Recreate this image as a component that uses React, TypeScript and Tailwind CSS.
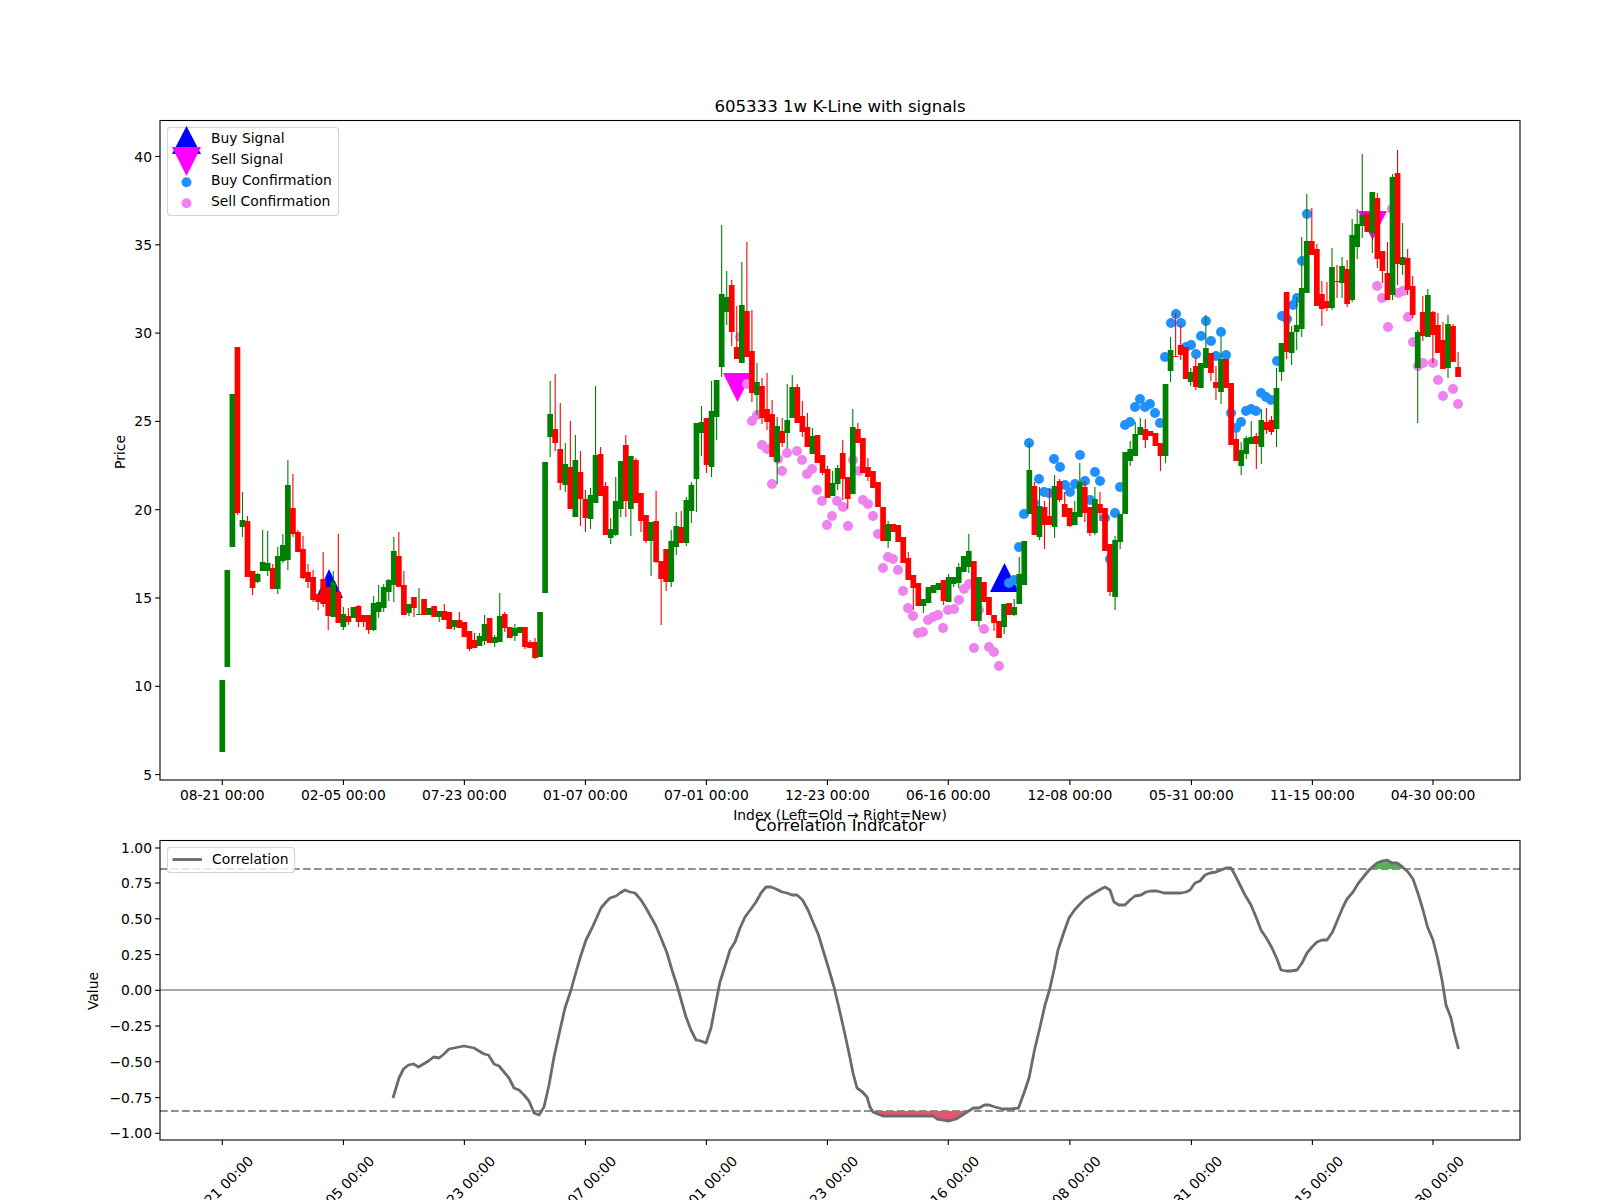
import React from "react";

type Candle = [string, number, number, number?, number?];

// color, body top, body bottom, wick top, wick bottom (pixels)
const candles: Candle[] = [
  ["g",680,752],["g",570,667],["g",394,547],["r",347,513,347,515],["g",520,527,492,537],
  ["r",521,577,516,577],["r",571,588,571,595],["g",574,582,573,583],["g",562,571,530,571],["g",563,571,531,576],
  ["r",568,589,564,589],["g",556,589,547,594],["g",545,561,534,563],["g",485,560,460,570],["r",508,534,474,537],
  ["r",532,552,530,552],["r",549,578,536,579],["r",572,582,564,588],["r",577,600,570,602],["r",594,602,594,610],
  ["r",579,604,552,607],["r",587,616,587,630],["g",582,617,571,617],["r",592,623,534,623],["g",614,627,607,630],
  ["r",616,622,608,625],["g",607,618],["r",606,622,605,627],["r",615,622,615,627],["r",615,630,615,634],
  ["g",603,630,596,631],["g",602,612,585,618],["g",587,608,584,612],["g",580,592,579,601],["g",551,585,537,602],
  ["r",556,587,532,587],["r",585,615,571,615],["g",604,613,604,616],["r",597,608,597,617],["g",614,615,588,615],
  ["r",599,615],["g",608,615],["r",606,617],["g",611,617,611,622],["r",611,620,604,620],
  ["r",612,629],["g",620,627,620,630],["r",620,628,612,628],["r",622,637],["r",631,649,631,651],
  ["r",640,648,633,648],["g",636,646,633,646],["g",624,641,615,645],["r",618,643],["g",637,643,635,647],
  ["g",616,642,593,642],["r",614,628,612,632],["r",627,638],["g",628,636,624,641],["g",627,633],
  ["r",627,647,627,649],["r",642,648,640,648],["r",642,658,638,659],["g",612,657],["g",462,593],
  ["g",414,437,381,457],["r",429,443,374,451],["r",449,483,403,490],["g",464,485,443,492],["r",467,509,421,509],
  ["g",460,517,435,517],["r",472,499,451,526],["r",499,518,490,532],["g",495,519,488,529],["g",455,503,386,503],
  ["r",454,496,447,496],["r",486,535,482,535],["g",529,538,518,544],["g",501,535,477,536],["g",461,509,461,517],
  ["r",445,501,435,517],["g",456,509,456,536],["r",460,503,458,503],["r",493,521,493,532],["r",515,541,515,543],
  ["g",522,541,522,576],["r",521,562,491,563],["r",561,579,561,625],["r",549,582,549,591],["g",541,582,530,587],
  ["g",526,547,512,555],["r",527,543,511,543],["g",500,543,497,546],["g",485,511,482,523],["g",423,479,423,512],
  ["g",422,433,406,456],["r",418,465,418,473],["g",411,467,381,477],["g",380,417,380,440],["g",294,367,225,377],
  ["g",297,312,271,325],["r",285,332,280,346],["r",347,359,306,359],["g",305,363,262,363],["r",311,357,242,357],
  ["r",351,393,310,402],["g",382,395,363,415],["r",386,418,378,424],["r",409,422,373,430],["r",414,457,400,457],
  ["g",426,462,417,484],["r",431,443,418,447],["g",420,433,384,448],["g",387,418,375,418],["r",387,423,384,423],
  ["r",416,432,401,437],["r",427,447,413,447],["g",436,454,428,454],["r",435,463],["r",455,473,455,475],
  ["r",469,498,466,498],["g",483,496,471,496],["g",468,484,465,490],["r",453,479,440,500],["r",477,499,477,509],
  ["g",427,494,409,494],["r",429,443,423,443],["r",438,473],["r",467,477,458,481],["r",471,488],
  ["r",482,507],["r",507,541],["g",524,541,521,548],["r",524,532],["r",525,542],
  ["r",537,563],["r",558,580,552,580],["r",575,588,575,610],["r",583,606],["g",599,606,599,613],
  ["g",587,603],["g",585,593],["g",583,590],["r",580,601,580,605],["g",577,602,574,602],
  ["g",577,584,577,587],["g",567,583,563,588],["g",556,572],["g",551,567,534,573],["r",561,621],
  ["g",577,621,577,627],["r",582,602],["r",597,615],["r",615,623,615,631],["r",621,638],
  ["g",604,627,604,634],["r",603,615],["g",607,615,599,616],["g",574,604,557,604],["g",541,585],
  ["g",470,514,443,514],["r",486,535,482,535],["g",506,537,487,540],["r",507,525,501,549],["r",516,525,489,525],
  ["g",486,527,475,538],["r",481,500,479,502],["r",504,517,492,517],["r",508,526,508,527],["g",512,525,501,525],
  ["g",482,517,463,517],["r",487,513,481,522],["r",507,533,507,536],["g",499,533,487,535],["r",504,513,492,521],
  ["r",508,551],["r",544,592,544,596],["g",540,597,536,610],["g",514,542,514,549],["g",452,514],
  ["g",449,461,441,466],["g",434,456,422,456],["g",427,435,418,435],["r",429,440,419,448],["r",431,436],
  ["r",433,446],["r",443,456,443,471],["g",384,456,384,463],["g",350,371,337,382],["r",356,357,313,357],
  ["r",345,355,325,360],["r",347,379],["g",372,382,368,386],["r",366,387,357,390],["g",363,388],
  ["g",348,368,315,368],["r",353,373,353,381],["r",382,388,366,400],["g",359,392,337,404],["r",359,388],
  ["r",383,445],["r",439,461,433,461],["g",450,466,442,475],["g",438,454,436,459],["g",437,444,421,444],
  ["r",436,444,433,469],["g",420,447,409,464],["r",422,430,408,434],["r",420,432,416,435],["g",388,429,368,447],
  ["g",343,372,343,381],["r",292,352,292,359],["g",332,353,326,365],["g",325,332,297,350],["g",288,329,237,337],
  ["g",241,293,194,293],["r",241,255,208,255],["r",249,306,244,306],["r",294,309,281,326],["r",301,308,282,311],
  ["g",267,308,248,310],["r",281,282,265,298],["g",266,283,257,298],["r",269,304,260,307],["g",235,300,219,302],
  ["g",224,247,209,259],["g",215,226,154,238],["r",213,232],["g",192,233,192,253],["r",198,259,193,268],
  ["r",251,271,251,283],["r",273,300,242,300],["g",177,295,174,300],["r",173,264,150,285],["g",257,265,223,275],
  ["r",258,290,249,295],["r",286,315,276,318],["g",332,368,330,423],["r",312,336,296,341],["g",295,337,289,337],
  ["r",312,335,311,363],["r",325,353,313,353],["r",340,369,322,369],["g",324,368,315,378],["r",326,362,324,362],
  ["r",367,377,352,377],
];

const blueDots = [
  [1009,583],[1014,580],[1019,547],[1024,514],[1029,443],[1034,503],[1039,479],[1044,492],[1049,493],[1054,459],
  [1060,467],[1065,485],[1070,492],[1075,484],[1080,455],[1085,481],[1090,500],[1095,472],[1100,481],[1105,518],
  [1110,559],[1115,513],[1120,487],[1125,425],[1130,422],[1135,407],[1140,399],[1145,407],[1150,404],[1155,413],
  [1160,423],[1165,357],[1171,323],[1176,314],[1181,323],[1186,347],[1191,345],[1196,354],[1201,336],[1206,321],
  [1211,341],[1216,356],[1221,332],[1226,355],[1231,413],[1236,428],[1241,422],[1246,411],[1251,409],[1256,411],
  [1261,393],[1266,397],[1271,400],[1277,361],[1282,316],[1287,319],[1293,305],[1297,298],[1302,261],[1307,214],
];

const pinkDots = [
  [740,337],[747,384],[757,415],[752,421],[762,445],[767,449],[778,459],[782,471],[772,484],[787,453],
  [797,451],[802,460],[812,469],[807,474],[817,490],[822,501],[837,501],[843,507],[832,516],[827,525],
  [848,526],[853,460],[859,471],[863,500],[868,504],[873,516],[878,534],[888,557],[893,559],[883,568],
  [898,570],[903,591],[908,608],[913,616],[923,632],[918,633],[928,620],[933,617],[938,615],[943,628],
  [948,610],[954,609],[959,600],[964,589],[969,584],[974,648],[989,647],[994,652],[999,666],[984,629],
  [979,610],[1377,286],[1382,298],[1388,327],[1392,209],[1398,293],[1403,291],[1408,317],[1413,342],[1418,366],
  [1423,363],[1433,363],[1438,380],[1443,396],[1453,389],[1458,404],
];

const corrLine =
  "393,1098 396,1088 399,1078 403.5,1069 408.5,1065 413.5,1064 418.5,1067 423.5,1064 428.5,1061 433.5,1057 439,1058 444,1054 449,1049 454,1048 459,1047 464,1046 469,1047 474,1048 479,1051 484,1054 488.5,1055 494,1064 499,1066 504,1072 509,1078 514,1088 519,1090 524,1095 529,1101 534,1113 539,1115 544,1107 549,1085 554,1057 560,1030 565,1008 571,990 576,972 581,955 586,940 592,928 597,917 601,908 606,902 610,898 616,896 620,893 625,890 630,892 635,893 641,900 646,908 651,917 656,926 661,938 667,953 672,970 677.5,987 682,1003 686,1017 691,1030 696,1040 701,1041 706,1043 711,1028 715,1007 720,982 726,963 730,950 735,942 740,928 745,917 751,909 756,902 761,893 766,887 771,887 776,889 782,892 787,893 792,895 797,895 802.5,900 808,910 813,922 818.5,935 823,950 828.5,968 834,987 839,1008 844,1030 849,1053 853,1073 857,1088 862.5,1092 867,1097 870,1107 873,1112 877.5,1114 883,1116 897,1116 915,1116 933,1116 937,1119 943.5,1120 949,1121 956,1119 961,1116 967,1112 973.5,1108 979,1108 984.5,1105 989,1105 995,1107 1002.5,1109 1011,1109 1018.5,1108 1024,1093 1029,1078 1034.5,1050 1040,1027 1045,1005 1049.5,990 1054,970 1058,950 1064,932 1069,918 1074.5,910 1080,904 1085,899 1091,895 1096,892 1101,889 1105,887 1110,890 1114,902 1119,905 1125,905 1130,900 1135,896 1141,895 1146,892 1151,891 1157,891 1164,893 1181,893 1186,892 1190,890 1195,883 1200,881 1205,875 1210,873 1216,872 1221,870 1226,868 1231,868 1235,875 1240,885 1245,895 1251,905 1256,917 1261,930 1267,939 1272,948 1277,959 1281,970 1286,971 1291,971 1297,970 1302,963 1307,953 1312,947 1317,942 1322,940 1327,940 1332.5,932 1337.5,920 1343,907 1347,899 1353,892 1358.5,883 1365,875 1370,869 1377,863 1382,861 1387,860 1392,863 1397,863 1402.5,867 1408,872 1413,879 1418.5,895 1423,910 1427.5,927 1433,940 1437.5,958 1442,980 1446,1005 1451,1018 1454,1032 1458.5,1049";

const tickXs = [222.3, 343.4, 464.4, 585.4, 706.4, 827.4, 948.3, 1069.9, 1191.4, 1312.4, 1433];
const tickLabels = ["08-21 00:00", "02-05 00:00", "07-23 00:00", "01-07 00:00", "07-01 00:00", "12-23 00:00", "06-16 00:00", "12-08 00:00", "05-31 00:00", "11-15 00:00", "04-30 00:00"];
const priceTicks = [[40, 156.5], [35, 244.8], [30, 333.1], [25, 421.4], [20, 509.7], [15, 598], [10, 686.3], [5, 774.6]];
const corrTicks = [
  ["1.00", 848], ["0.75", 883], ["0.50", 918.8], ["0.25", 954.6], ["0.00", 990.3],
  ["\u22120.25", 1026], ["\u22120.50", 1061.8], ["\u22120.75", 1097.6], ["\u22121.00", 1133.3],
] as [string, number][];

function CandleBars() {
  return (
    <g>
      {candles.map(([color, top, bottom, wickTop, wickBottom], i) => {
        const x = 222.3 + 5.044 * i;
        const fill = color === "g" ? "#008000" : "#ff0000";
        return (
          <g key={i}>
            <rect x={x - 0.55} y={wickTop ?? top} width={1.1} height={(wickBottom ?? bottom) - (wickTop ?? top)} fill={fill} />
            <rect x={x - 2.85} y={top} width={5.7} height={bottom - top} fill={fill} />
          </g>
        );
      })}
    </g>
  );
}

function Axes({ top, bottom }: { top: number; bottom: number }) {
  return (
    <g>
      <rect x={160} y={top} width={1360} height={bottom - top} fill="none" stroke="#000" strokeWidth={1.1} />
      {tickXs.map((x) => (
        <line key={x} x1={x} x2={x} y1={bottom} y2={bottom + 4.9} stroke="#000" strokeWidth={1.1} />
      ))}
    </g>
  );
}

function PriceChart() {
  return (
    <g>
      <text x={840} y={112} textAnchor="middle" className="text-[16.6px]">605333 1w K-Line with signals</text>
      <polygon points="316,598 329,569 343,598" fill="#0000ff" />
      <polygon points="990,592 1004.5,563 1019,592" fill="#0000ff" />
      <polygon points="723,373 752,373 737.5,402" fill="#ff00ff" />
      <polygon points="1358,211 1387,211 1372.5,240" fill="#ff00ff" />
      {blueDots.map(([x, y], i) => <circle key={i} cx={x} cy={y} r={5} fill="#1e90ff" />)}
      {pinkDots.map(([x, y], i) => <circle key={i} cx={x} cy={y} r={5} fill="#ee82ee" />)}
      <CandleBars />
      <Axes top={120.5} bottom={780} />
      {priceTicks.map(([label, y]) => (
        <g key={label}>
          <line x1={155.1} x2={160} y1={y} y2={y} stroke="#000" strokeWidth={1.1} />
          <text x={152} y={y + 5} textAnchor="end">{label}</text>
        </g>
      ))}
      {tickLabels.map((label, i) => (
        <text key={label} x={tickXs[i]} y={800} textAnchor="middle">{label}</text>
      ))}
      <text x={840} y={820} textAnchor="middle">Index (Left=Old → Right=New)</text>
      <text transform="translate(125,452) rotate(-90)" textAnchor="middle">Price</text>
      <rect x={167.5} y={127.5} width={171} height={88} rx={3} fill="#fff" fillOpacity={0.8} stroke="#d4d4d4" strokeWidth={1.1} />
      <polygon points="172,154 186.5,126 201,154" fill="#0000ff" />
      <polygon points="172,147 201,147 186.5,176" fill="#ff00ff" />
      <circle cx={186.5} cy={182.3} r={5} fill="#1e90ff" />
      <circle cx={186.5} cy={203.3} r={5} fill="#ee82ee" />
      <text x={211} y={142.7}>Buy Signal</text>
      <text x={211} y={163.7}>Sell Signal</text>
      <text x={211} y={184.7}>Buy Confirmation</text>
      <text x={211} y={205.7}>Sell Confirmation</text>
    </g>
  );
}

function CorrelationChart() {
  return (
    <g>
      <text x={840} y={831} textAnchor="middle" className="text-[16.6px]">Correlation Indicator</text>
      <line x1={160} x2={1520} y1={990} y2={990} stroke="#a9a9a9" strokeWidth={2} />
      <line x1={160} x2={1520} y1={869} y2={869} stroke="#8f8f8f" strokeWidth={2} strokeDasharray="7.7 3.3" />
      <line x1={160} x2={1520} y1={1111} y2={1111} stroke="#8f8f8f" strokeWidth={2} strokeDasharray="7.7 3.3" />
      <polygon points="873,1111 967,1111 961,1116 956,1119 949,1121 943.5,1120 937,1119 933,1116 883,1116 877.5,1114" fill="#e8536f" />
      <polygon points="1370,869 1405,869 1402.5,867 1397,863 1392,863 1387,860 1382,861 1377,863" fill="#5aad5a" />
      <polyline points={corrLine} fill="none" stroke="#6b6b6b" strokeWidth={2.8} strokeLinejoin="round" />
      <Axes top={840.5} bottom={1140} />
      {corrTicks.map(([label, y]) => (
        <g key={label}>
          <line x1={155.1} x2={160} y1={y} y2={y} stroke="#000" strokeWidth={1.1} />
          <text x={152} y={y + 5} textAnchor="end">{label}</text>
        </g>
      ))}
      {tickLabels.map((label, i) => (
        <text key={label} transform={`translate(${tickXs[i] + 2},1192) rotate(-45)`} textAnchor="middle">{label}</text>
      ))}
      <text transform="translate(98,991) rotate(-90)" textAnchor="middle">Value</text>
      <rect x={167.5} y={847.5} width={127} height={25} rx={3} fill="#fff" fillOpacity={0.8} stroke="#d4d4d4" strokeWidth={1.1} />
      <line x1={172.5} x2={202} y1={859.5} y2={859.5} stroke="#6b6b6b" strokeWidth={2.8} />
      <text x={212} y={864}>Correlation</text>
    </g>
  );
}

export default function App() {
  return (
    <div className="w-[1600px] h-[1200px] overflow-hidden bg-white">
      <svg width={1600} height={1200} viewBox="0 0 1600 1200" className="block fill-black text-[13.89px] font-['DejaVu_Sans',sans-serif]">
        <PriceChart />
        <CorrelationChart />
      </svg>
    </div>
  );
}
